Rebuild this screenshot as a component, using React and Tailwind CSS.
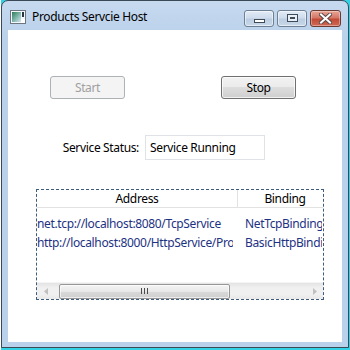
import React from "react";

const font = { fontFamily: '"Segoe UI", "Noto Sans", sans-serif', letterSpacing: "-0.35px" };

function CaptionButton({ kind }) {
  if (kind === "close") {
    return (
      <div className="w-[31px] h-[17px] rounded-[3px] border border-[#6b3a33] bg-[linear-gradient(#e8a596,#d47766_45%,#c24a36_55%,#cf6a55)] flex items-center justify-center shadow-[inset_0_0_0_1px_rgba(255,255,255,0.35)]">
        <svg width="13" height="11" viewBox="0 0 13 11">
          <path d="M2 1.5 L11 9.5 M11 1.5 L2 9.5" stroke="#5a4a48" strokeWidth="4" strokeLinecap="square" />
          <path d="M2 1.5 L11 9.5 M11 1.5 L2 9.5" stroke="#ffffff" strokeWidth="2" strokeLinecap="square" />
        </svg>
      </div>
    );
  }
  return (
    <div className="w-[30px] h-[17px] rounded-[3px] border border-[#6f7f94] bg-[linear-gradient(#e3ecf7,#cfdcec_45%,#bccde2_55%,#c8d8ea)] flex items-center justify-center shadow-[inset_0_0_0_1px_rgba(255,255,255,0.5)]">
      {kind === "min" ? (
        <div className="w-[11px] h-[4px] mt-[5px] bg-white border border-[#3f4a58]" />
      ) : (
        <div className="w-[11px] h-[8px] border border-[#3f4a58] bg-[#e8eef6] flex items-center justify-center">
          <div className="w-[5px] h-[2px] border border-[#3f4a58] bg-white" />
        </div>
      )}
    </div>
  );
}

export default function App() {
  const rows = [
    ["net.tcp://localhost:8080/TcpService", "NetTcpBinding"],
    ["http://localhost:8000/HttpService/ProductsService", "BasicHttpBinding"],
  ];
  return (
    <div className="w-[350px] h-[350px] bg-[#32d2e6] border-l border-white overflow-hidden" style={font}>
      <div className="w-[348px] h-[348px] border border-[#3b4856] rounded-t-[7px] flex flex-col px-[6px] pb-[5px] bg-[linear-gradient(#c6d9ef,#b9d1ea_40px)]">
        <div className="h-[29px] shrink-0 flex items-center">
          <svg width="16" height="16" viewBox="0 0 16 16" className="ml-[2px] mt-[2px]">
            <defs>
              <linearGradient id="ig" x1="0" y1="0" x2="1" y2="1">
                <stop offset="0" stopColor="#2f7a5a" />
                <stop offset="0.6" stopColor="#8cc0b8" />
                <stop offset="1" stopColor="#d8e4ee" />
              </linearGradient>
            </defs>
            <rect x="0.5" y="1.5" width="15" height="13" fill="#f4f6f8" stroke="#6b7682" />
            <rect x="2" y="3" width="9" height="10" fill="url(#ig)" />
            <rect x="12" y="3" width="2" height="5" fill="#2a3440" />
            <rect x="11" y="10" width="4" height="4" fill="#ffffff" />
          </svg>
          <span className="ml-[6px] text-[12px] text-black mt-[2px]">Products Servcie Host</span>
          <div className="ml-auto flex gap-[3px] mt-[5px] mr-[1px]">
            <CaptionButton kind="min" />
            <CaptionButton kind="max" />
            <CaptionButton kind="close" />
          </div>
        </div>
        <div className="flex-1 bg-white flex flex-col">
          <div className="flex justify-between pl-[42px] pr-[46px] pt-[46px]">
            <div className="w-[75px] h-[23px] rounded-[3px] border border-[#adb2b5] bg-[#f4f4f4] text-[12px] text-[#a0a0a0] flex items-center justify-center">
              Start
            </div>
            <div className="w-[75px] h-[23px] rounded-[3px] border border-[#707070] bg-[linear-gradient(#f2f2f2,#ebebeb_50%,#dddddd_50%,#cfcfcf)] text-[12px] text-black flex items-center justify-center shadow-[inset_0_0_0_1px_rgba(255,255,255,0.7)]">
              Stop
            </div>
          </div>
          <div className="flex items-center mt-[36px] pl-[54px]">
            <div className="w-[83px] pr-[6px] text-right text-[12px] text-black whitespace-nowrap">Service Status:</div>
            <div className="w-[120px] h-[25px] border border-[#dfe3e8] flex items-center pl-[4px] text-[12px] text-black">
              Service Running
            </div>
          </div>
          <div className="mt-[29px] ml-[28px] w-[288px] h-[111px] border border-dashed border-[#3d5b7a] flex flex-col overflow-hidden">
            <div className="h-[18px] shrink-0 flex border-b border-[#e2e2e2] text-[12px] text-black">
              <div className="w-[201px] shrink-0 flex items-center justify-center border-r border-[#e2e2e2] pt-[1px]">Address</div>
              <div className="w-[90px] shrink-0 flex items-center justify-center pl-[4px] pt-[1px]">Binding</div>
            </div>
            <div className="flex-1 flex flex-col pt-[6px]">
              {rows.map((r, i) => (
                <div key={i} className="h-[19px] flex items-center text-[12px] text-[#1d3283] whitespace-nowrap">
                  <div className="w-[196px] shrink-0 overflow-hidden mr-[5px]">{r[0]}</div>
                  <div className="w-[84px] shrink-0 pl-[7px] overflow-hidden">{r[1]}</div>
                </div>
              ))}
            </div>
            <div className="h-[17px] shrink-0 flex items-center bg-[linear-gradient(#e4e4e4,#f0f0f0_30%,#f0f0f0_70%,#e8e8e8)] border-t border-[#f4f4f4]">
              <div className="w-[17px] shrink-0 flex items-center justify-center">
                <svg width="4" height="7" viewBox="0 0 4 7"><path d="M4 0 L0 3.5 L4 7 Z" fill="#c0c0c0" /></svg>
              </div>
              <div className="ml-[5px] w-[171px] h-[15px] rounded-[2px] border border-[#979797] bg-[linear-gradient(#f4f4f4,#e8e8e8_50%,#d9d9d9_50%,#cfcfcf)] flex items-center justify-center shadow-[inset_0_0_0_1px_rgba(255,255,255,0.6)]">
                <div className="w-[1px] h-[6px] bg-[#4a4a4a]" />
                <div className="w-[1px] h-[6px] bg-[#4a4a4a] ml-[2px]" />
                <div className="w-[1px] h-[6px] bg-[#4a4a4a] ml-[2px]" />
              </div>
              <div className="ml-auto w-[17px] shrink-0 flex items-center justify-center">
                <svg width="4" height="7" viewBox="0 0 4 7"><path d="M0 0 L4 3.5 L0 7 Z" fill="#c0c0c0" /></svg>
              </div>
            </div>
          </div>
        </div>
      </div>
    </div>
  );
}
